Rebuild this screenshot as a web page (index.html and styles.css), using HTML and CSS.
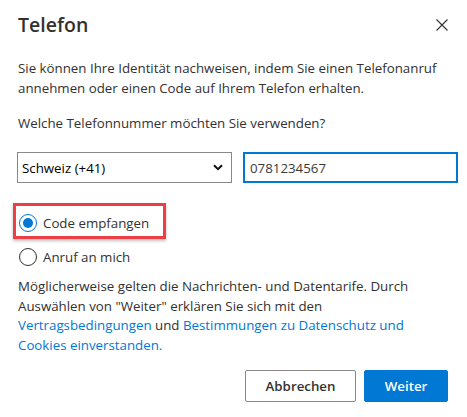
FILE: index.html
```html
<!DOCTYPE html>
<html lang="de">
<head>
<meta charset="utf-8">
<title>Telefon</title>
<link rel="stylesheet" href="styles.css">
</head>
<body>
<div class="dialog">
  <div class="header">
    <h1 class="title">Telefon</h1>
    <button class="close" aria-label="Schließen">
      <svg width="12" height="12" viewBox="0 0 12 12"><path d="M0.5 0.5 L11.5 11.5 M11.5 0.5 L0.5 11.5" stroke="#323130" stroke-width="1.1" fill="none"/></svg>
    </button>
  </div>
  <p class="intro">Sie können Ihre Identität nachweisen, indem Sie einen Telefonanruf annehmen oder einen Code auf Ihrem Telefon erhalten.</p>
  <p class="question">Welche Telefonnummer möchten Sie verwenden?</p>
  <div class="fields">
    <div class="select">
      <span class="select-text">Schweiz (+41)</span>
      <svg class="chev" width="10" height="7" viewBox="0 0 10 7"><path d="M1 1.2 L5 5.2 L9 1.2" stroke="#111" stroke-width="2" fill="none"/></svg>
    </div>
    <div class="input">0781234567</div>
  </div>
  <div class="options">
    <label class="option highlighted">
      <span class="radio checked"></span>
      <span class="option-label">Code empfangen</span>
    </label>
    <label class="option">
      <span class="radio"></span>
      <span class="option-label">Anruf an mich</span>
    </label>
  </div>
  <p class="terms">Möglicherweise gelten die Nachrichten- und Datentarife. Durch Auswählen von "Weiter" erklären Sie sich mit den <a href="#">Vertragsbedingungen</a> und <a href="#">Bestimmungen zu Datenschutz und</a> <a href="#">Cookies einverstanden.</a></p>
  <div class="footer">
    <button class="btn secondary">Abbrechen</button>
    <button class="btn primary">Weiter</button>
  </div>
</div>
</body>
</html>
```

FILE: styles.css
```css
html, body {
  margin: 0;
  padding: 0;
  background: #ffffff;
}

body {
  font-family: "Open Sans", "Noto Sans", sans-serif;
  color: #323130;
  font-size: 13.3px;
}

.dialog {
  padding: 11px 9px 0 18px;
  width: 440px;
}

.header {
  display: flex;
  align-items: center;
  justify-content: space-between;
  height: 28px;
}

.title {
  margin: 0;
  font-size: 19.5px;
  font-weight: 600;
  line-height: 28px;
  color: #323130;
}

.close {
  border: 0;
  background: none;
  padding: 0;
  margin-right: 10px;
  width: 12px;
  height: 12px;
  display: flex;
}

.intro {
  margin: 19px 0 0;
  line-height: 20px;
  width: 432px;
}

.question {
  margin: 15px 0 0;
  line-height: 20px;
}

.fields {
  display: flex;
  gap: 11px;
  margin-top: 19px;
  margin-left: -1px;
}

.select {
  box-sizing: border-box;
  width: 215px;
  height: 31px;
  border: 1px solid #8a8886;
  display: flex;
  align-items: center;
  justify-content: space-between;
  padding: 0 8px 0 4px;
  color: #000;
}

.input {
  box-sizing: border-box;
  width: 215px;
  height: 31px;
  border: 2px solid #0078d4;
  display: flex;
  align-items: center;
  padding: 0 5px;
  color: #3b3a39;
}

.options {
  margin-top: 30px;
  display: flex;
  flex-direction: column;
  gap: 14px;
}

.option {
  display: flex;
  align-items: center;
  gap: 6px;
  height: 20px;
  position: relative;
}

.highlighted::after {
  content: "";
  position: absolute;
  left: -5px;
  top: -10px;
  width: 147px;
  height: 30px;
  border: 3px solid #ec3f45;
  box-shadow: 0 2px 3px rgba(0, 0, 0, 0.25);
}

.radio {
  box-sizing: border-box;
  width: 18px;
  height: 18px;
  border-radius: 50%;
  border: 1px solid #323130;
  margin-left: 1px;
  display: flex;
  align-items: center;
  justify-content: center;
  background: #fff;
}

.radio.checked {
  border-color: #0078d4;
}

.radio.checked::before {
  content: "";
  width: 10px;
  height: 10px;
  border-radius: 50%;
  background: #0078d4;
}

.terms {
  margin: 10px 0 0;
  line-height: 19.5px;
  width: 420px;
}

.terms a {
  color: #0078d4;
  text-decoration: none;
}

.footer {
  display: flex;
  justify-content: flex-end;
  gap: 8px;
  margin-top: 15px;
  padding-right: 10px;
}

.btn {
  font-family: inherit;
  font-size: 13.3px;
  font-weight: 600;
  height: 32px;
  border-radius: 2px;
  padding: 0;
}

.secondary {
  width: 111px;
  background: #fff;
  border: 1px solid #8a8886;
  color: #323130;
}

.primary {
  width: 84px;
  background: #0078d4;
  border: 1px solid #0078d4;
  color: #fff;
}
```
